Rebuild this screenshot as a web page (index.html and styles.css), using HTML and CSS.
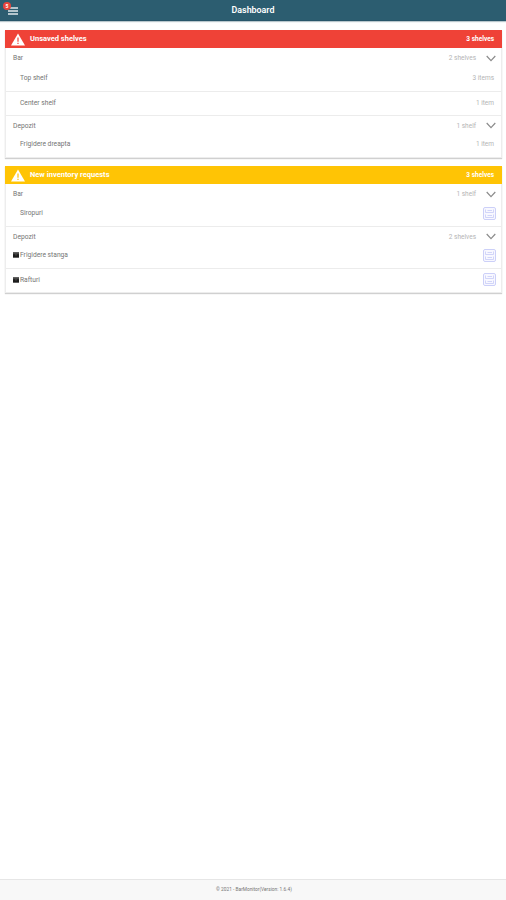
FILE: index.html
```
<!DOCTYPE html>
<html lang="en">
<head>
  <meta charset="UTF-8">
  <meta name="viewport" content="width=device-width, initial-scale=1.0">
  <title>Dashboard</title>
  <link rel="stylesheet" href="styles.css">
</head>
<body>
  <svg class="symbols">
    <symbol id="warning" viewBox="0 0 14 13">
      <path d="M7 0.5 L14 12.6 H0 Z" fill="#fff"/>
      <path d="M7 4.6 V8.8 M7 9.8 V11" fill="none" stroke="currentColor" stroke-width="1.2"/>
    </symbol>
    <symbol id="chevron" viewBox="0 0 10 7">
      <path d="M0.7 1 L5 5.6 L9.3 1" fill="none" stroke="#8c8c8c" stroke-width="1.2"/>
    </symbol>
    <symbol id="list" viewBox="0 0 13 13">
      <rect x="0.5" y="0.5" width="12" height="12" rx="1.5" fill="#f8f8ff" stroke="#ccd0f8"/>
      <path d="M2.5 2.5 V5.5 H10.5 V2.5 M2.5 7.5 V10.5 H10.5 V7.5 M4.5 3.5 H9 M4.5 8.5 H9" stroke="#ccd0f8" stroke-width="0.9" fill="none"/>
    </symbol>
    <symbol id="box" viewBox="0 0 6 6">
      <path d="M0 0.3 H6 V5.7 H0 Z" fill="#1c1c1c"/>
      <path d="M0 1.7 H6 M2.2 2.9 H3.8" stroke="#888" stroke-width="0.5"/>
    </symbol>
  </svg>

  <header class="topbar">
    <button class="menu" aria-label="Menu">
      <svg class="menu-icon" viewBox="0 0 10 8"><path d="M0 1 H10 M0 4 H10 M0 7 H10" stroke="#dfe7ea" stroke-width="1.6"/></svg>
      <span class="badge">5</span>
    </button>
    <h1>Dashboard</h1>
  </header>

  <main>
    <section class="card card-red">
      <div class="card-header">
        <svg class="warning"><use href="#warning"/></svg>
        <h2>Unsaved shelves</h2>
        <span class="total">3 shelves</span>
      </div>
      <div class="group">
        <span>Bar</span>
        <span class="count">2 shelves</span>
        <svg class="chevron"><use href="#chevron"/></svg>
      </div>
      <div class="item first"><span>Top shelf</span><span class="count">3 items</span></div>
      <div class="item"><span>Center shelf</span><span class="count">1 item</span></div>
      <div class="group line">
        <span>Depozit</span>
        <span class="count">1 shelf</span>
        <svg class="chevron"><use href="#chevron"/></svg>
      </div>
      <div class="item first"><span>Frigidere dreapta</span><span class="count">1 item</span></div>
    </section>

    <section class="card card-yellow">
      <div class="card-header">
        <svg class="warning"><use href="#warning"/></svg>
        <h2>New inventory requests</h2>
        <span class="total">3 shelves</span>
      </div>
      <div class="group">
        <span>Bar</span>
        <span class="count">1 shelf</span>
        <svg class="chevron"><use href="#chevron"/></svg>
      </div>
      <div class="item first"><span>Siropuri</span><svg class="list"><use href="#list"/></svg></div>
      <div class="group line">
        <span>Depozit</span>
        <span class="count">2 shelves</span>
        <svg class="chevron"><use href="#chevron"/></svg>
      </div>
      <div class="item first boxed"><svg class="box"><use href="#box"/></svg><span>Frigidere stanga</span><svg class="list"><use href="#list"/></svg></div>
      <div class="item boxed"><svg class="box"><use href="#box"/></svg><span>Rafturi</span><svg class="list"><use href="#list"/></svg></div>
    </section>
  </main>

  <footer>© 2021 - BarMonitor(Version: 1.6.4)</footer>
</body>
</html>
```
FILE: styles.css
```
* {
  box-sizing: border-box;
}

body {
  margin: 0;
  height: 100vh;
  display: flex;
  flex-direction: column;
  font-family: Roboto, Arial, sans-serif;
  font-size: 6.7px;
  line-height: 10px;
  color: #757575;
  background: #fff;
}

.symbols {
  display: none;
}

h1,
h2 {
  margin: 0;
}

.topbar {
  flex: none;
  height: 21px;
  display: grid;
  grid-template-columns: 30px 1fr 30px;
  align-items: center;
  background: #2c5d70;
  border-bottom: 1px solid #28566a;
  box-shadow: 0 1px 1px #b9c7cc;
}

.topbar h1 {
  font-size: 8.9px;
  font-weight: 600;
  text-align: center;
  color: #fff;
}

.menu {
  position: relative;
  height: 20px;
  padding: 0;
  border: 0;
  background: none;
}

.menu-icon {
  position: absolute;
  left: 8px;
  top: 7px;
  width: 10px;
  height: 8px;
}

.badge {
  position: absolute;
  left: 3px;
  top: 2px;
  width: 8px;
  height: 8px;
  border-radius: 50%;
  background: #e8453c;
  color: #fff;
  font-family: Roboto, Arial, sans-serif;
  font-size: 5px;
  font-weight: 700;
  line-height: 8px;
  text-align: center;
}

main {
  flex: 1;
  padding: 9px 4px 0 5px;
}

.card {
  height: 127px;
  margin-bottom: 9px;
  border: 1px solid #ededed;
  border-top: 0;
  background: #fff;
  box-shadow: 0 1px 1px #d0d0d0;
}

.card-header {
  height: 18px;
  margin: 0 -1px;
  padding: 0 8px 0 6px;
  display: flex;
  align-items: center;
  color: #fff;
}

.card-red .card-header {
  background: #ef4237;
}

.card-yellow .card-header {
  background: #ffc405;
}

.warning {
  width: 14px;
  height: 13px;
  margin-right: 5px;
}

.card-red .warning {
  color: #ef4237;
}

.card-yellow .warning {
  color: #ffc405;
}

.card-header h2 {
  font-size: 7.5px;
  font-weight: 700;
}

.total {
  margin-left: auto;
  font-size: 6.5px;
  font-weight: 700;
}

.group {
  height: 20px;
  padding: 0 5px 0 7px;
  display: flex;
  align-items: center;
}

.line {
  border-top: 1px solid #ececec;
}

.count {
  margin-left: auto;
  font-size: 6.5px;
  color: #b4b4b4;
}

.chevron {
  width: 10px;
  height: 7px;
  margin-left: 10px;
}

.item {
  height: 24px;
  padding: 0 7px 2px 14px;
  display: flex;
  align-items: center;
  border-top: 1px solid #ececec;
}

.item.first {
  height: 22px;
  padding-bottom: 4px;
  border-top: 0;
}

.card-red .group:not(.line) + .item {
  height: 23px;
}

.item.boxed {
  padding-left: 7px;
}

.box {
  width: 6px;
  height: 6px;
  margin-right: 1px;
}

.list {
  width: 13px;
  height: 13px;
  margin-left: auto;
  margin-right: -2px;
}

.card-red {
  height: 128px;
  margin-bottom: 8px;
}

footer {
  flex: none;
  height: 21px;
  padding-top: 5px;
  border-top: 1px solid #e6e6e6;
  background: #f8f8f8;
  font-size: 4.8px;
  text-align: center;
  padding-left: 2px;
}
```
